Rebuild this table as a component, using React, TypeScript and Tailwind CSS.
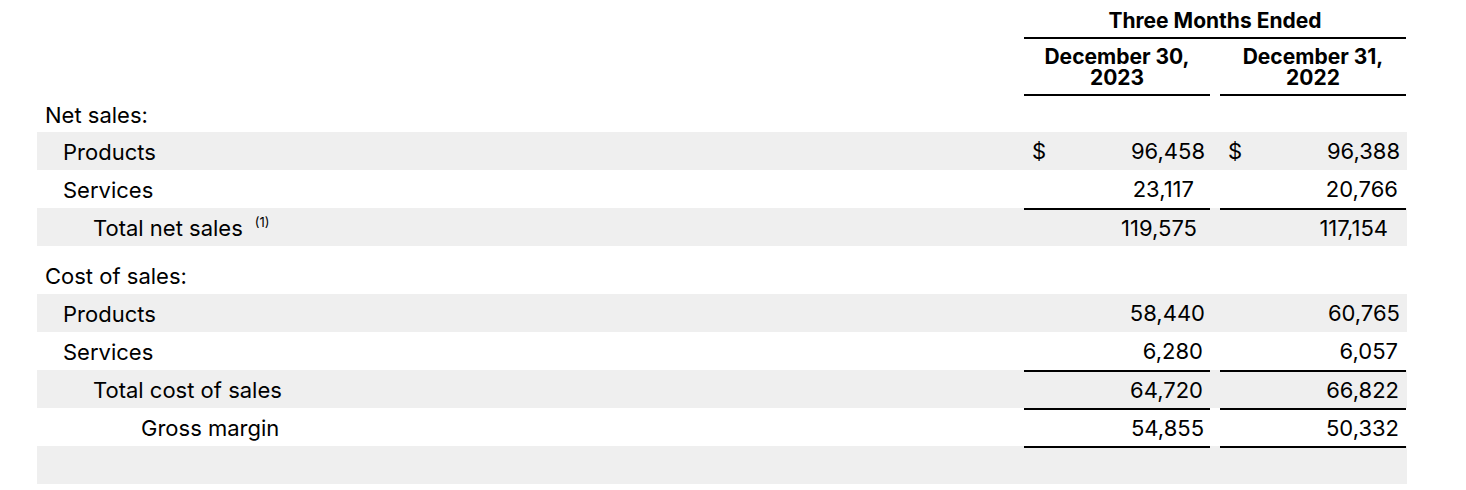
import React from "react"

type Row = {
  label: string
  indent: number
  a?: string
  b?: string
  padA?: number
  padB?: number
  shaded?: boolean
  rule?: boolean
  dollar?: boolean
  note?: string
}

const indentClass = ["pl-2", "pl-[26px]", "pl-[56px]", "pl-[104px]"]

const netSales: Row[] = [
  { label: "Products", indent: 1, a: "96,458", b: "96,388", padA: 5, padB: 6, shaded: true, dollar: true },
  { label: "Services", indent: 1, a: "23,117", b: "20,766", padA: 16, padB: 8 },
  { label: "Total net sales", indent: 2, a: "119,575", b: "117,154", padA: 13, padB: 18, shaded: true, rule: true, note: "(1)" },
]

const costOfSales: Row[] = [
  { label: "Products", indent: 1, a: "58,440", b: "60,765", padA: 5, padB: 6, shaded: true },
  { label: "Services", indent: 1, a: "6,280", b: "6,057", padA: 7, padB: 8 },
  { label: "Total cost of sales", indent: 2, a: "64,720", b: "66,822", padA: 7, padB: 7, shaded: true, rule: true },
  { label: "Gross margin", indent: 3, a: "54,855", b: "50,332", padA: 6, padB: 7, rule: true },
  { label: "", indent: 0, shaded: true, rule: true },
]

function ValueCell({ value, pad, dollar, rule }: { value?: string; pad?: number; dollar?: boolean; rule?: boolean }) {
  return (
    <div className={`flex h-full items-center justify-between pl-2 ${rule ? "border-t-2 border-black" : ""}`} style={{ paddingRight: pad ?? 6 }}>
      <span>{dollar ? "$" : ""}</span>
      <span>{value}</span>
    </div>
  )
}

function DataRow({ row }: { row: Row }) {
  return (
    <div className={`grid h-[38px] grid-cols-[977px_186px_186px] gap-x-[10px] ${row.shaded ? "bg-[#efefef]" : ""}`}>
      <div className={`flex items-center pt-[2px] ${indentClass[row.indent]}`}>
        {row.label}
        {row.note && <sup className="ml-[12px] text-[13px]">{row.note}</sup>}
      </div>
      <ValueCell value={row.a} pad={row.padA} dollar={row.dollar} rule={row.rule} />
      <ValueCell value={row.b} pad={row.padB} dollar={row.dollar} rule={row.rule} />
    </div>
  )
}

export default function App() {
  return (
    <div className="h-[490px] w-[1466px] bg-white text-[22px] text-black" style={{ fontFamily: "Inter, 'Noto Sans', sans-serif" }}>
      <div className="ml-[37px] w-[1370px]">
        {/* column headings */}
        <div className="grid grid-cols-[987px_382px]">
          <div />
          <div className="flex h-[39px] items-center justify-center border-b-2 border-black pt-[5px] text-[21px] font-bold">
            Three Months Ended
          </div>
        </div>
        <div className="grid grid-cols-[977px_186px_186px] gap-x-[10px]">
          <div />
          <div className="flex h-[57px] flex-col items-center justify-center border-b-2 border-black pt-[1px] text-[21px] leading-[21px] font-bold">
            <span>December 30,</span>
            <span>2023</span>
          </div>
          <div className="flex h-[57px] flex-col items-center justify-center border-b-2 border-black pt-[1px] text-[21px] leading-[21px] font-bold">
            <span>December 31,</span>
            <span>2022</span>
          </div>
        </div>

        <div className="flex h-[36px] items-center pl-2 pt-[2px]">Net sales:</div>
        {netSales.map((r) => (
          <DataRow key={"n" + r.label} row={r} />
        ))}

        <div className="h-[10px]" />

        <div className="flex h-[38px] items-center pl-2 pt-[2px]">Cost of sales:</div>
        {costOfSales.map((r, i) => (
          <DataRow key={"c" + i} row={r} />
        ))}
      </div>
    </div>
  )
}
